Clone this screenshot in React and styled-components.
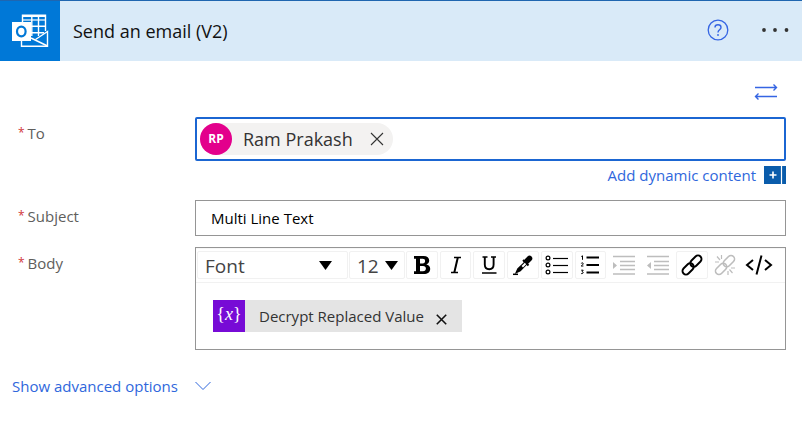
import React from "react";
import styled, { createGlobalStyle } from "styled-components";

const GlobalStyle = createGlobalStyle`
  * { box-sizing: border-box; }
  body {
    margin: 0;
    background: #fff;
    color: #333;
    font-family: "Segoe UI", "Open Sans", "Noto Sans", sans-serif;
    font-size: 15px;
  }
  button, input, select { font: inherit; color: inherit; }
`;

const Card = styled.main`
  display: flex;
  flex-direction: column;
`;

const Header = styled.header`
  display: flex;
  align-items: center;
  height: 61px;
  border-top: 1px solid #1f66b0;
  background: #d9eaf8;
`;

const Logo = styled.div`
  display: flex;
  align-items: center;
  justify-content: center;
  width: 60px;
  height: 60px;
  background: #0078d7;
`;

const Title = styled.h1`
  flex: 1;
  margin: 0 0 0 13px;
  color: #111;
  font-size: 18px;
  font-weight: 400;
  line-height: 24px;
`;

const IconButton = styled.button`
  display: flex;
  align-items: center;
  justify-content: center;
  padding: 0;
  border: 0;
  background: none;
  color: ${(p) => p.$color || "#333"};
  cursor: pointer;
`;

const HeaderActions = styled.div`
  display: flex;
  align-items: center;
  gap: 31px;
  padding: 0 12px 2px 0;
`;

const Form = styled.form`
  display: flex;
  flex-direction: column;
  padding: 20px 16px 0 12px;
`;

const SwitchRow = styled.div`
  display: flex;
  justify-content: flex-end;
  height: 36px;
  padding: 2px 8px 16px 0;
`;

const Field = styled.div`
  display: grid;
  grid-template-columns: 183px minmax(0, 1fr);
  align-items: start;
  margin-top: ${(p) => p.$gap || 0}px;
`;

const Label = styled.label`
  display: flex;
  gap: 3px;
  padding: 6px 0 0 6px;
  color: #605e5c;
  font-size: 15px;
  line-height: 20px;
`;

const Star = styled.span`
  color: #d13438;
  font-size: 12px;
`;

const PeopleBox = styled.div`
  display: flex;
  align-items: center;
  height: 44px;
  padding: 0 3px;
  border: 2px solid #1b66d2;
  border-radius: 2px;
`;

const Persona = styled.span`
  display: flex;
  align-items: center;
  height: 32px;
  padding-right: 9px;
  border-radius: 16px;
  background: #f3f2f1;
  font-size: 18px;
  white-space: nowrap;
`;

const Avatar = styled.span`
  width: 32px;
  margin-right: 11px;
  border-radius: 50%;
  background: #e3008c;
  color: #fff;
  font-size: 12px;
  font-weight: 700;
  line-height: 32px;
  text-align: center;
`;

const PersonaName = styled.span`
  margin-right: 17px;
`;

const PeopleInput = styled.input`
  flex: 1;
  min-width: 0;
  border: 0;
  outline: 0;
  background: none;
`;

const DynamicRow = styled.div`
  display: flex;
  align-items: center;
  justify-content: flex-end;
  gap: 8px;
  height: 28px;
`;

const Link = styled.a`
  color: #2f67dc;
  font-size: 15px;
  line-height: 20px;
  text-decoration: none;
`;

const AddButton = styled(IconButton)`
  width: 22px;
  height: 18px;
  background: #0a5cab;
`;

const SubjectInput = styled.input`
  width: 100%;
  height: 36px;
  padding: 0 15px;
  border: 1px solid #959595;
  border-radius: 0;
  outline: 0;
  color: #000;
  font-size: 15px;
`;

const Editor = styled.div`
  border: 1px solid #959595;
`;

const Toolbar = styled.div`
  display: flex;
  gap: 1px;
  padding: 2px 10px 3px 1px;
  border-top: 1px solid #f7f7f7;
  border-bottom: 1px solid #f1f1f1;
`;

const Picker = styled.div`
  display: flex;
  align-items: center;
  width: ${(p) => p.$width}px;
  height: 28px;
  padding-right: ${(p) => p.$end}px;
  border: 1px solid #f1f1f1;
  border-radius: 2px;
`;

const Select = styled.select`
  flex: 1;
  min-width: 0;
  height: 30px;
  padding: 2px 0 0 7px;
  appearance: none;
  border: 0;
  outline: 0;
  background: none;
  color: #444;
  font-size: 19px;
  line-height: 28px;
`;

const Tools = styled.div`
  flex: 1;
  display: grid;
  grid-template-columns: repeat(11, minmax(0, 1fr));
  gap: 2px;
`;

const Tool = styled(IconButton)`
  height: 28px;
  border: 1px solid ${(p) => (p.$plain ? "transparent" : "#f1f1f1")};
  border-radius: 2px;
  color: ${(p) => (p.$off ? "#bdbdbd" : "#000")};
`;

const Content = styled.div`
  padding: 17px;
  outline: 0;
`;

const Token = styled.span`
  display: inline-flex;
  align-items: center;
  height: 32px;
  padding-right: 15px;
  background: #e4e4e4;
  color: #333;
  font-size: 15px;
  vertical-align: top;
`;

const TokenIcon = styled.span`
  width: 32px;
  height: 32px;
  margin-right: 14px;
  background: #770bd6;
  color: #fff;
  font-family: "Liberation Serif", serif;
  font-size: 18px;
  line-height: 29px;
  text-align: center;
`;

const TokenName = styled.span`
  margin-right: 12px;
`;

const TokenRemove = styled(IconButton)`
  padding-top: 6px;
  color: #111;
`;

const Advanced = styled.button`
  display: flex;
  align-items: center;
  align-self: flex-start;
  gap: 17px;
  margin-top: 26px;
  padding: 0;
  border: 0;
  background: none;
  color: #2f67dc;
  font-size: 15px;
  line-height: 20px;
  cursor: pointer;
`;

const OutlookIcon = () => (
  <svg width="38" height="34" viewBox="0 0 38 34" fill="none">
    <path d="M11.5 8V1.2h23V17M10.500 27v5.300h26V17.500L24.500 25.500" stroke="#fff" strokeWidth="1.4" />
    <path d="M11 2.200h24M20 12.200h14.500M20 18.800h13M20.8 2v20M27.500 2v20" stroke="#fff" strokeWidth="1.4" />
    <path d="M11 6h24" stroke="#fff" strokeWidth="1.2" />
    <path d="M20 24l16.500 8" stroke="#fff" strokeWidth="1.4" />
    <path d="M1 8h19v19H1z" fill="#fff" />
    <ellipse cx="10.3" cy="17.5" rx="4.3" ry="4.8" stroke="#0078d7" strokeWidth="2.2" />
  </svg>
);

const HelpIcon = () => (
  <svg width="22" height="22" viewBox="0 0 22 22" fill="none" stroke="currentColor">
    <circle cx="11" cy="11" r="9.8" strokeWidth="1.3" />
    <path d="M8 8.4C8 6.7 9.2 5.8 11 5.8s3 1 3 2.6c0 2.3-3 2.4-3 5" strokeWidth="1.4" />
    <circle cx="11" cy="16" r=".9" fill="currentColor" stroke="none" />
  </svg>
);

const MoreIcon = () => (
  <svg width="30" height="6" viewBox="0 0 30 6" fill="currentColor">
    <circle cx="4" cy="3" r="1.9" />
    <circle cx="15" cy="3" r="1.9" />
    <circle cx="26.5" cy="3" r="1.9" />
  </svg>
);

const SwapIcon = () => (
  <svg width="24" height="18" viewBox="0 0 24 18" fill="none" stroke="currentColor" strokeWidth="1.4">
    <path d="M1 4.5h21M19.5 1.5l3 3-3 3M23 13.5H2M4.5 10.5l-3 3 3 3" />
  </svg>
);

const CrossIcon = ({ size, weight }) => (
  <svg width={size} height={size} viewBox="0 0 14 14" stroke="currentColor" strokeWidth={weight}>
    <path d="M1 1l12 12M13 1L1 13" />
  </svg>
);

const PlusIcon = () => (
  <svg width="22" height="18" viewBox="0 0 22 18" stroke="#fff">
    <path d="M5.5 9h7M9 5.5v7" strokeWidth="1.6" />
    <path d="M17.5 0v18" strokeWidth="1.2" />
  </svg>
);

const CaretIcon = () => (
  <svg width="13" height="9" viewBox="0 0 13 9">
    <path d="M0 0h13L6.5 9z" fill="#000" />
  </svg>
);

const ChevronIcon = () => (
  <svg width="16" height="10" viewBox="0 0 16 10" fill="none" stroke="currentColor">
    <path d="M.5 1L8 8.5 15.5 1" />
  </svg>
);

const BoldIcon = () => (
  <svg width="20" height="20" viewBox="0 0 20 20">
    <path
      fillRule="evenodd"
      fill="currentColor"
      d="M2 1h9.500c3.800 0 5.700 1.800 5.700 4.500 0 2-1 3.300-2.900 3.900 2.500.5 3.900 2 3.900 4.300 0 3.300-2.400 5.300-6.500 5.300H2v-2.700h2V3.700H2zM8 3.800v4.600h2.600c1.700 0 2.500-.8 2.500-2.300s-.8-2.300-2.500-2.300zM8 11v5.200h3c1.900 0 2.900-.9 2.900-2.600S12.900 11 11 11z"
    />
  </svg>
);

const ItalicIcon = () => (
  <svg width="20" height="20" viewBox="0 0 20 20" fill="none" stroke="currentColor">
    <path d="M8 2.5h7M5 17.5h7" strokeWidth="1.3" />
    <path d="M11.800 2.500L8.300 17.500" strokeWidth="2" />
  </svg>
);

const UnderlineIcon = () => (
  <svg width="20" height="20" viewBox="0 0 20 20" fill="none" stroke="currentColor">
    <path d="M3.500 2h5M12 2h5M3 18h14.500" strokeWidth="1.4" />
    <path d="M5.800 2v7.500c0 3 1.500 4.700 4.400 4.700s4.400-1.700 4.400-4.700V2" strokeWidth="1.9" />
  </svg>
);

const PenIcon = () => (
  <svg width="22" height="22" viewBox="0 0 22 22" fill="none" stroke="currentColor">
    <path d="M17.500 4.500l-3 3" strokeWidth="5.500" strokeLinecap="round" />
    <path d="M11 6l5.500 5.500" strokeWidth="2" />
    <path d="M12.300 8.500l2 2-6 6.300-4.300 2 1.800-4z" fill="currentColor" strokeWidth="1.200" />
    <path d="M13.500 9.500l-3.200 3.200" stroke="#fff" strokeWidth="2" />
    <path d="M1 20.300h5" strokeWidth="1.500" />
  </svg>
);

const BulletsIcon = () => (
  <svg width="24" height="20" viewBox="0 0 24 20" fill="none" stroke="currentColor">
    {[3, 10, 17].map((y) => (
      <g key={y}>
        <circle cx="3" cy={y} r="1.9" strokeWidth="1.2" />
        <path d={`M8 ${y + 0.5}h15`} strokeWidth="1.2" />
      </g>
    ))}
  </svg>
);

const NumbersIcon = () => (
  <svg width="20" height="20" viewBox="0 0 20 20" fill="none" stroke="currentColor">
    <path d="M6.500 2.500h12.500M6.500 10h12.500M6.500 17.500h12.500" strokeWidth="2" />
    <path d="M1.300 1.500L2.500.8v4M1.200 8.500c.4-.9 2.200-.9 2 .3-.1.700-1.200 1.300-2 2.200h2.200M1.200 15.200h2l-1.100 1.500c1.600 0 1.600 2.300-.9 1.900" strokeWidth="1" />
  </svg>
);

const IndentIcon = ({ outdent }) => (
  <svg width="24" height="20" viewBox="0 0 24 20" stroke="currentColor">
    <path d="M1 1.500h22M8 6.500h15M8 10.500h15M8 14.500h15M1 19h22" strokeWidth="1.4" />
    <path d={outdent ? "M5 7v7l-4-3.500z" : "M1 7v7l4-3.500z"} fill="currentColor" stroke="none" />
  </svg>
);

const LinkIcon = ({ broken }) => (
  <svg width="22" height="22" viewBox="0 0 22 22" fill="none" stroke="currentColor" strokeWidth={broken ? 1.6 : 1.9}>
    <g transform="rotate(-45 11 11)">
      <rect x="-1" y="7.5" width="13" height="7" rx="3.5" />
      <rect x="10" y="7.5" width="13" height="7" rx="3.5" />
    </g>
    {broken && <path d="M7.500 1v4M3 2.500l3 3.500M1 8h4M14 21v-4M18.500 19l-3-3.500M21 14h-4" strokeWidth="1.2" />}
  </svg>
);

const CodeIcon = () => (
  <svg width="28" height="22" viewBox="0 0 28 22" fill="none" stroke="currentColor" strokeWidth="2">
    <path d="M8 6l-6 5 6 5M20 6l6 5-6 5M16.500 1.500l-5 19" />
  </svg>
);

const TOOLS = [
  { label: "Bold", icon: <BoldIcon /> },
  { label: "Italic", icon: <ItalicIcon /> },
  { label: "Underline", icon: <UnderlineIcon /> },
  { label: "Text color", icon: <PenIcon /> },
  { label: "Bulleted list", icon: <BulletsIcon /> },
  { label: "Numbered list", icon: <NumbersIcon /> },
  { label: "Indent", icon: <IndentIcon />, off: true, plain: true },
  { label: "Outdent", icon: <IndentIcon outdent />, off: true, plain: true },
  { label: "Link", icon: <LinkIcon /> },
  { label: "Unlink", icon: <LinkIcon broken />, off: true, plain: true },
  { label: "Code view", icon: <CodeIcon />, plain: true },
];

export default function App() {
  return (
    <Card>
      <GlobalStyle />
      <Header>
        <Logo>
          <OutlookIcon />
        </Logo>
        <Title>Send an email (V2)</Title>
        <HeaderActions>
          <IconButton type="button" aria-label="Help" $color="#3565e3">
            <HelpIcon />
          </IconButton>
          <IconButton type="button" aria-label="More commands">
            <MoreIcon />
          </IconButton>
        </HeaderActions>
      </Header>

      <Form onSubmit={(e) => e.preventDefault()}>
        <SwitchRow>
          <IconButton type="button" aria-label="Switch input mode" $color="#3565e3">
            <SwapIcon />
          </IconButton>
        </SwitchRow>

        <Field>
          <Label htmlFor="to">
            <Star>*</Star>To
          </Label>
          <div>
            <PeopleBox>
              <Persona>
                <Avatar>RP</Avatar>
                <PersonaName>Ram Prakash</PersonaName>
                <IconButton type="button" aria-label="Remove Ram Prakash">
                  <CrossIcon size={14} weight={1.1} />
                </IconButton>
              </Persona>
              <PeopleInput id="to" />
            </PeopleBox>
            <DynamicRow>
              <Link href="#dynamic">Add dynamic content</Link>
              <AddButton type="button" aria-label="Open dynamic content">
                <PlusIcon />
              </AddButton>
            </DynamicRow>
          </div>
        </Field>

        <Field $gap={11}>
          <Label htmlFor="subject">
            <Star>*</Star>Subject
          </Label>
          <SubjectInput id="subject" defaultValue="Multi Line Text" />
        </Field>

        <Field $gap={11}>
          <Label id="body-label" as="div">
            <Star>*</Star>Body
          </Label>
          <Editor>
            <Toolbar role="toolbar" aria-label="Formatting">
              <Picker $width={151} $end={15}>
                <Select aria-label="Font" defaultValue="Font">
                  <option>Font</option>
                </Select>
                <CaretIcon />
              </Picker>
              <Picker $width={56} $end={6}>
                <Select aria-label="Font size" defaultValue="12">
                  <option>12</option>
                </Select>
                <CaretIcon />
              </Picker>
              <Tools>
                {TOOLS.map((t) => (
                  <Tool key={t.label} type="button" aria-label={t.label} $off={t.off} $plain={t.plain}>
                    {t.icon}
                  </Tool>
                ))}
              </Tools>
            </Toolbar>
            <Content role="textbox" aria-multiline="true" aria-labelledby="body-label" tabIndex={0}>
              <Token>
                <TokenIcon>
                  {"{"}
                  <i>x</i>
                  {"}"}
                </TokenIcon>
                <TokenName>Decrypt Replaced Value</TokenName>
                <TokenRemove type="button" aria-label="Remove Decrypt Replaced Value">
                  <CrossIcon size={11} weight={2} />
                </TokenRemove>
              </Token>
            </Content>
          </Editor>
        </Field>

        <Advanced type="button">
          Show advanced options
          <ChevronIcon />
        </Advanced>
      </Form>
    </Card>
  );
}
